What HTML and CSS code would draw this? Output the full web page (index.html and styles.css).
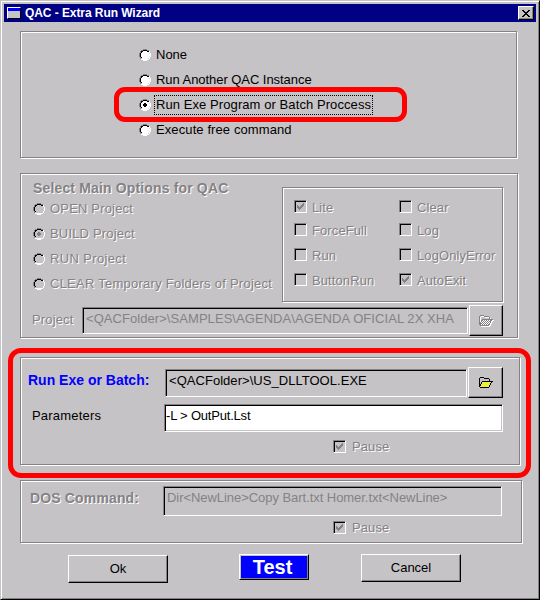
FILE: index.html
```html
<!DOCTYPE html>
<html lang="en">
<head>
<meta charset="utf-8">
<title>QAC - Extra Run Wizard</title>
<link rel="stylesheet" href="styles.css">
</head>
<body>
<svg class="defs" width="0" height="0" aria-hidden="true">
  <defs>
    <symbol id="radio" viewBox="0 0 12 12">
      <path class="r-dark" d="M4 0h4v1h-4zM2 1h2v1h-2zM8 1h2v1h-2zM1 2h1v2h-1zM0 4h1v4h-1zM1 8h1v2h-1z"/>
      <path class="r-black" d="M4 1h4v1h2v1h-2v-1h-4v1h-1v1h-1v4h1v1h-1v-1h-1v-4h1v-2h2z"/>
      <path class="r-white" d="M10 2h1v2h1v4h-1v2h-1v1h-2v1h-4v-1h-2v-1h2v0h4v0h2v-2h1v-4h-1z"/>
    </symbol>
    <symbol id="tick" viewBox="0 0 9 9">
      <path d="M1 3h1v1h1v1h1v-1h1v-1h1v-1h1v-1h1v3h-1v1h-1v1h-1v1h-1v1h-1v-1h-1v-1h-1z"/>
    </symbol>
    <pattern id="dither" width="2" height="2" patternUnits="userSpaceOnUse">
      <rect width="2" height="2" fill="#ffff00"/><path d="M0 0h1v1h-1zM1 1h1v1h-1z" fill="#dede7b"/>
    </pattern>
    <pattern id="ditherGray" width="2" height="2" patternUnits="userSpaceOnUse">
      <rect width="2" height="2" fill="#fff"/><path d="M0 0h1v1h-1zM1 1h1v1h-1z" fill="#848284"/>
    </pattern>
    <symbol id="folder" viewBox="0 0 14 12">
      <path d="M.5 9.5v-8l1-1h3l1 1h4l1 1v2M.5 9.5l3-5h9.500l-3 5.500h-9z" fill="none" stroke="currentColor"/>
    </symbol>
  </defs>
</svg>
<main class="window">
  <header class="titlebar">
    <span class="app-icon"></span>
    <h1>QAC - Extra Run Wizard</h1>
    <button class="close" aria-label="Close"><svg width="8" height="7" viewBox="0 0 8 7" shape-rendering="crispEdges"><path d="M0 0h2v1h1v1h2v-1h1v-1h2v1h-1v1h-1v1h-1v1h1v1h1v1h1v1h-2v-1h-1v-1h-2v1h-1v1h-2v-1h1v-1h1v-1h1v-1h-1v-1h-1v-1h-1z"/></svg></button>
  </header>

  <section class="group mode">
    <div class="option"><svg class="radio"><use href="#radio"/></svg><span class="t-none">None</span></div>
    <div class="option"><svg class="radio"><use href="#radio"/></svg><span class="t-another">Run Another QAC Instance</span></div>
    <div class="option selected"><svg class="radio"><use href="#radio"/><path class="dot" d="M5 4h2v1h1v2h-1v1h-2v-1h-1v-2h1z"/></svg><span class="t-exe focus">Run Exe Program or Batch Proccess</span></div>
    <div class="option"><svg class="radio"><use href="#radio"/></svg><span class="t-free">Execute free command</span></div>
    <div class="mark mark-option"></div>
  </section>

  <section class="group main-options disabled">
    <div class="columns">
      <div class="actions">
        <h2 class="t-select">Select Main Options for QAC</h2>
        <div class="option"><svg class="radio"><use href="#radio"/></svg><span class="t-open">OPEN Project</span></div>
        <div class="option"><svg class="radio"><use href="#radio"/><path class="dot" d="M5 4h2v1h1v2h-1v1h-2v-1h-1v-2h1z"/></svg><span class="t-build">BUILD Project</span></div>
        <div class="option"><svg class="radio"><use href="#radio"/></svg><span class="t-run">RUN Project</span></div>
        <div class="option"><svg class="radio"><use href="#radio"/></svg><span class="t-cleartmp">CLEAR Temporary Folders of Project</span></div>
      </div>
      <div class="group flags">
        <div class="check"><i class="box"><svg><use href="#tick"/></svg></i><span>Lite</span></div>
        <div class="check"><i class="box"></i><span>Clear</span></div>
        <div class="check"><i class="box"></i><span>ForceFull</span></div>
        <div class="check"><i class="box"></i><span>Log</span></div>
        <div class="check"><i class="box"></i><span>Run</span></div>
        <div class="check"><i class="box"></i><span>LogOnlyError</span></div>
        <div class="check"><i class="box"></i><span class="t-button">ButtonRun</span></div>
        <div class="check"><i class="box"><svg><use href="#tick"/></svg></i><span>AutoExit</span></div>
      </div>
    </div>
    <div class="project-row">
      <label class="t-project">Project</label>
      <div class="field"><span class="t-path">&lt;QACFolder&gt;\SAMPLES\AGENDA\AGENDA OFICIAL 2X XHA</span></div>
      <button class="browse" aria-label="Browse project"><svg class="folder off"><path d="M3.500 5h9l-2.500 5h-9z" fill="url(#ditherGray)"/><use href="#folder"/></svg></button>
    </div>
  </section>

  <section class="group execute">
    <div class="exe-row">
      <label class="t-label">Run Exe or Batch:</label>
      <div class="field"><span class="t-tool">&lt;QACFolder&gt;\US_DLLTOOL.EXE</span></div>
      <button class="browse" aria-label="Browse program"><svg class="folder"><path d="M3.500 5h9l-2.500 5h-9z" fill="url(#dither)"/><use href="#folder"/></svg></button>
    </div>
    <div class="param-row">
      <label class="t-params">Parameters</label>
      <div class="field editable"><span class="t-out">-L &gt; OutPut.Lst</span></div>
    </div>
    <div class="check pause disabled"><i class="box"><svg><use href="#tick"/></svg></i><span>Pause</span></div>
    <div class="mark mark-execute"></div>
  </section>

  <section class="group dos disabled">
    <div class="dos-row">
      <label class="t-dos">DOS Command:</label>
      <div class="field"><span class="t-dir">Dir&lt;NewLine&gt;Copy Bart.txt Homer.txt&lt;NewLine&gt;</span></div>
    </div>
    <div class="check pause"><i class="box"><svg><use href="#tick"/></svg></i><span>Pause</span></div>
  </section>

  <footer class="buttons">
    <button class="push ok">Ok</button>
    <button class="push test">Test</button>
    <button class="push cancel">Cancel</button>
  </footer>
</main>
</body>
</html>
```
FILE: styles.css
```css
* { box-sizing: border-box; }
body {
  margin: 0;
  font: 13px/16px "Liberation Sans", Arial, sans-serif;
  color: #000;
  white-space: nowrap;
}
.defs { position: absolute; }
h1, h2 { margin: 0; font-size: inherit; }
svg { display: block; flex: none; shape-rendering: crispEdges; }
.window {
  width: 540px;
  height: 600px;
  background: #c6c3c6;
  border: 1px solid;
  border-color: #c6c3c6 #000 #000 #c6c3c6;
  box-shadow: inset 1px 1px #fff, inset -1px -1px #848284;
  padding: 3px;
}
.titlebar {
  display: flex;
  align-items: center;
  width: 532px;
  height: 18px;
  padding: 0 3px;
  background: #000084;
  color: #fff;
}
.titlebar h1 { margin-left: 4px; font-size: 12px; letter-spacing: -0.07px; flex: 1; }
.app-icon {
  width: 14px;
  height: 12px;
  background: linear-gradient(#0000ff 3px, #c6c3c6 3px);
  border: 1px solid;
  border-color: #fff #000 #000 #fff;
}
button { font: inherit; color: #000; padding: 0; border-radius: 0; }
.close {
  display: flex;
  align-items: center;
  justify-content: center;
  width: 16px;
  height: 14px;
  margin-right: -1px;
  background: #c6c3c6;
  border: 1px solid;
  border-color: #fff #000 #000 #fff;
  box-shadow: inset -1px -1px #848284;
}

/* Etched frames */
.group {
  position: relative;
  margin-left: 16px;
  border: 1px solid #848284;
  box-shadow: 1px 1px #fff, inset 1px 1px #fff;
}
.disabled { color: #848284; text-shadow: 1px 1px #fff; }
.disabled .field { text-shadow: none; }

.option { display: flex; align-items: center; height: 25px; }
.option span { margin-left: 5px; }
.radio { width: 12px; height: 12px; }
.r-dark { fill: #848284; }
.r-black { fill: #000; }
.r-white { fill: #fff; }
.dot { fill: currentColor; }
.mode .radio { background: radial-gradient(circle, #fff 4.5px, transparent 5px); }

.check { display: flex; align-items: center; height: 13px; }
.check span { margin-left: 6px; letter-spacing: 0.1px; }
.box {
  width: 13px;
  height: 13px;
  flex: none;
  border: 1px solid;
  border-color: #848284 #fff #fff #848284;
  box-shadow: inset 1px 1px #000;
  padding: 1px;
}
.box svg { width: 9px; height: 9px; fill: #848284; }

.field {
  display: flex;
  border: 1px solid;
  border-color: #848284 #fff #fff #848284;
  box-shadow: inset 1px 1px #000;
  padding: 3px 0 0 3px;
}
.browse {
  display: flex;
  align-items: center;
  justify-content: center;
  background: #c6c3c6;
  border: 1px solid;
  border-color: #fff #000 #000 #fff;
  box-shadow: inset -1px -1px #848284;
}
.folder { width: 14px; height: 12px; color: #000; }
.folder.off { color: #848284; filter: drop-shadow(1px 1px #fff); }

.mode { width: 497px; height: 127px; margin-top: 9px; padding: 10px 0 0 118px; }
.focus { outline: 1px dotted #000; outline-offset: 1px; }

.main-options { width: 498px; height: 165px; margin-top: 15px; }
.columns { display: flex; height: 131px; }
.actions { width: 261px; padding: 6px 0 0 12px; }
.actions h2 { height: 16px; font-size: 14px; }
.flags {
  display: grid;
  grid-template-columns: 105px auto;
  grid-template-rows: 23px 25px 25px 25px;
  width: 221px;
  height: 115px;
  margin: 13px 0 0;
  padding: 12px 0 0 11px;
}
.flags span { margin-left: 5px; padding-top: 2px; }
.project-row { display: flex; padding-left: 11px; }
.project-row label { width: 50px; margin-top: 7px; }
.project-row .field { width: 386px; height: 27px; margin-top: 2px; }
.project-row .browse { width: 34px; height: 31px; margin-left: 1px; }

.execute { width: 500px; height: 108px; margin-top: 19px; padding-top: 9px; }
.exe-row { display: flex; padding-left: 7px; }
.exe-row label { width: 137px; margin-top: 5px; font-size: 14px; font-weight: bold; color: #0000ff; }
.exe-row .field { width: 302px; height: 28px; margin-top: 2px; }
.exe-row .browse { width: 35px; height: 31px; margin-left: 1px; }
.param-row { display: flex; margin-top: 6px; padding-left: 11px; }
.param-row label { width: 132px; margin-top: 4px; }
.param-row .field { width: 339px; height: 28px; background: #fff; padding-left: 1px; }
.param-row .field { box-shadow: inset 1px 1px #000, inset -1px -1px #c6c3c6; }
.pause { margin: 8px 0 0 312px; }

.dos { width: 502px; height: 63px; margin-top: 15px; padding-top: 5px; }
.dos-row { display: flex; padding-left: 9px; }
.dos-row label { width: 133px; margin-top: 4px; font-size: 14px; font-weight: bold; }
.dos-row .field { width: 339px; height: 30px; }
.dos .pause { margin-top: 5px; }

/* Red callouts */
.mark { position: absolute; border: 5px solid #ff0000; }
.mark-option { left: 93px; top: 55px; width: 293px; height: 35px; border-radius: 11px; }
.mark-execute { left: -13px; top: -10px; width: 523px; height: 130px; border-radius: 13px; }

.buttons { display: flex; align-items: flex-start; padding: 11px 0 0 64px; }
.push {
  width: 100px;
  height: 28px;
  background: #c6c3c6;
  border: 1px solid;
  border-color: #fff #000 #000 #fff;
  box-shadow: inset -1px -1px #848284;
}
.ok { margin-top: 1px; }
.test {
  width: 70px;
  height: 26px;
  margin-left: 71px;
  padding-right: 3px;
  background: #0000ff;
  color: #fff;
  font-size: 20px;
  line-height: 20px;
  font-weight: bold;
  box-shadow: inset 1px 1px #c6c3c6, inset -1px -1px #848284;
}
.cancel { margin-left: 52px; }

/* Tracking per label */
.t-exe { letter-spacing: 0.08px; }
.t-another { letter-spacing: -0.05px; }
.t-free { letter-spacing: 0.1px; }
.t-select { letter-spacing: 0.15px; }
.t-open, .t-build { letter-spacing: 0.18px; }
.t-run { letter-spacing: 0.36px; }
.t-cleartmp { letter-spacing: 0.25px; }
.check .t-button { letter-spacing: 0.1px; }
.t-project { letter-spacing: 0.15px; }
.t-path { letter-spacing: 0.06px; }
.t-tool { letter-spacing: 0.04px; }
.t-params { letter-spacing: 0.2px; }
.t-out { letter-spacing: -0.2px; }
.t-dos { letter-spacing: 0.15px; }
.t-dir { letter-spacing: -0.05px; }
```
